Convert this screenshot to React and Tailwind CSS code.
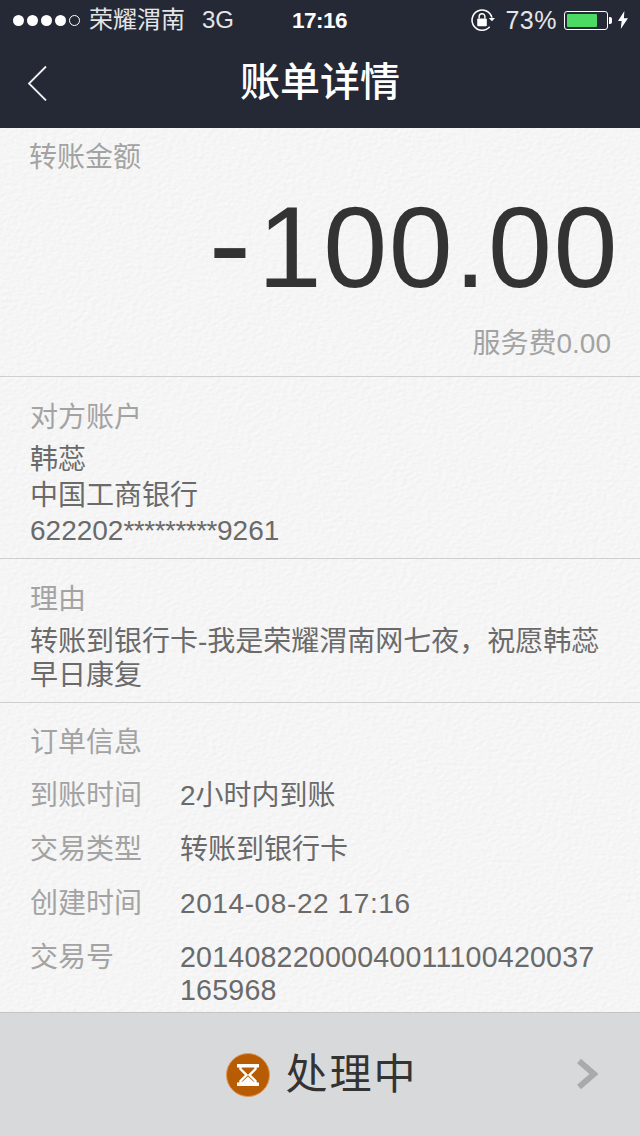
const font = { fontFamily: '"Liberation Sans", "Noto Sans CJK SC", sans-serif' };

function StatusBar() {
    return (
        <div className="h-10 flex items-center text-[#e4e5e8] relative">
            <div className="flex items-center gap-[3px] ml-[13px]">
                <span className="w-[11px] h-[11px] rounded-full bg-white"></span>
                <span className="w-[11px] h-[11px] rounded-full bg-white"></span>
                <span className="w-[11px] h-[11px] rounded-full bg-white"></span>
                <span className="w-[11px] h-[11px] rounded-full bg-white"></span>
                <span className="w-[11px] h-[11px] rounded-full border border-white"></span>
            </div>
            <span className="ml-[9px] text-[24px] leading-none">荣耀渭南</span>
            <span className="ml-[17px] text-[24px] leading-none">3G</span>
            <span className="absolute left-[292px] top-[8px] text-[22.5px] leading-[26px] font-bold text-white tracking-[-0.5px]">17:16</span>
            <div className="ml-auto flex items-center">
                <svg width="25" height="25" viewBox="0 0 26 26" className="mr-[10px]">
                    <path d="M20.5 19.5A10.5 10.5 0 1 1 22.8 10" fill="none" stroke="#fff" strokeWidth="1.6" />
                    <path d="M19.5 10.5h6.5l-3.2 3.4z" fill="#fff" />
                    <rect x="7.5" y="11" width="10" height="8" rx="1" fill="#fff" />
                    <path d="M9.5 11V9a3 3 0 0 1 6 0v2" fill="none" stroke="#fff" strokeWidth="1.5" />
                </svg>
                <span className="text-[25px] leading-none mr-[7px] tracking-[0.5px]">73%</span>
                <div className="w-[44px] h-[19px] rounded-[3px] border border-white p-[2px]">
                    <div className="h-full w-[30px] bg-[#4cd964] rounded-[1px]"></div>
                </div>
                <span className="w-[3px] h-[7px] bg-white ml-[1px] rounded-r-[2px]"></span>
                <svg width="10" height="20" viewBox="0 0 11 20" className="ml-[6px] mr-[12px]">
                    <path d="M7 0L0 11h4l-1 9 8-12H6.5z" fill="#fff" />
                </svg>
            </div>
        </div>
    );
}

function InfoRow({ label, children }) {
    return (
        <div className="flex text-[28px] leading-[34px]">
            <div className="w-[150px] text-[#a3a3a3] shrink-0">{label}</div>
            <div className="text-[#6a6a6a] flex-1">{children}</div>
        </div>
    );
}

// paper grain behind the content
function Paper() {
    return (
        <svg className="absolute inset-0 w-full h-full" aria-hidden="true">
            <filter id="paper" x="0" y="0" width="100%" height="100%" colorInterpolationFilters="sRGB">
                <feTurbulence type="fractalNoise" baseFrequency="0.2 0.3" numOctaves="4" seed="4" />
                <feDiffuseLighting lightingColor="#ffffff" surfaceScale="0.18">
                    <feDistantLight azimuth="45" elevation="74" />
                </feDiffuseLighting>
            </filter>
            <rect width="100%" height="100%" filter="url(#paper)" />
        </svg>
    );
}

export default function App() {
    return (
        <div className="w-[640px] h-[1136px] flex flex-col overflow-hidden bg-[#f5f5f5]" style={font}>
            <header className="bg-[#252936] h-[128px] shrink-0">
                <StatusBar />
                <div className="h-[88px] relative flex items-center justify-center">
                    <svg width="22" height="36" viewBox="0 0 22 36" className="absolute left-[27px] top-[25px]">
                        <path d="M19 1.5L2 18.5l17 17" fill="none" stroke="#f0f0f2" strokeWidth="1.8" />
                    </svg>
                    <h1 className="text-[40px] leading-none text-white font-medium -mt-[4px]">账单详情</h1>
                </div>
            </header>

            <main className="flex-1 min-h-0 relative">
                <Paper />
                <section className="relative h-[249px] border-b border-[#cfcfcd] px-[29px] pt-[13px]">
                    <div className="text-[28px] leading-[34px] text-[#a3a3a3]">转账金额</div>
                    <div className="text-right text-[115px] leading-[118px] tracking-[1.6px] text-[#333333] -mr-[8px] mt-[13px]"><span className="text-[127px] leading-[0] mr-[5px]">-</span>100.00</div>
                    <div className="text-right text-[28px] leading-[34px] text-[#a3a3a3] mt-[21px]">服务费0.00</div>
                </section>

                <section className="relative h-[182px] border-b border-[#cfcfcd] pl-[30px] pt-[23px]">
                    <div className="text-[28px] leading-[36px] text-[#a3a3a3] mb-[6px]">对方账户</div>
                    <div className="text-[28px] leading-[36px] text-[#6a6a6a]">韩蕊</div>
                    <div className="text-[28px] leading-[36px] text-[#6a6a6a]">中国工商银行</div>
                    <div className="text-[28px] leading-[34px] text-[#6a6a6a]">622202<span className="tracking-[-0.5px]">*********</span>9261</div>
                </section>

                <section className="relative h-[144px] border-b border-[#cfcfcd] pl-[30px] pr-[36px] pt-[23px]">
                    <div className="text-[28px] leading-[36px] text-[#a3a3a3] mb-[7px]">理由</div>
                    <div className="text-[28px] leading-[34px] text-[#6a6a6a]">转账到银行卡-我是荣耀渭南网七夜，祝愿韩蕊早日康复</div>
                </section>

                <section className="relative pl-[30px] pr-[40px] pt-[22px]">
                    <div className="text-[28px] leading-[36px] text-[#a3a3a3] mb-[18px]">订单信息</div>
                    <div className="flex flex-col gap-[20px]">
                        <InfoRow label="到账时间">2小时内到账</InfoRow>
                        <InfoRow label="交易类型">转账到银行卡</InfoRow>
                        <InfoRow label="创建时间"><span className="tracking-[0.6px]">2014-08-22 17:16</span></InfoRow>
                        <InfoRow label="交易号"><div className="break-all text-[28.6px] leading-[33px] tracking-[0.2px]">20140822000040011100420037165968</div></InfoRow>
                    </div>
                </section>
            </main>

            <footer className="h-[124px] shrink-0 bg-[#d8d9db] border-t border-[#c4c4c4] flex items-center justify-center relative">
                <div className="flex items-center ml-[4px]">
                    <svg width="44" height="44" viewBox="0 0 44 44" className="mr-[15px]">
                        <circle cx="22" cy="22" r="21.5" fill="#b85c04" stroke="#dd9a5c" strokeWidth="1" />
                        <rect x="11" y="11" width="22" height="3.5" fill="#fff" />
                        <rect x="11" y="29.5" width="22" height="3.5" fill="#fff" />
                        <path d="M14.5 14v2l6 6-6 6v2h15v-2l-6-6 6-6v-2" fill="none" stroke="#fff" strokeWidth="2.4" />
                        <path d="M15.5 29.5l6.5-6 6.5 6z" fill="#fff" />
                    </svg>
                    <span className="text-[42px] leading-none text-[#333333] tracking-[2px]">处理中</span>
                </div>
                <svg width="22" height="32" viewBox="0 0 22 32" className="absolute right-[42px] top-[45px]">
                    <path d="M3 3l15 13L3 29" fill="none" stroke="#aaaaaa" strokeWidth="6" />
                </svg>
            </footer>
        </div>
    );
}
